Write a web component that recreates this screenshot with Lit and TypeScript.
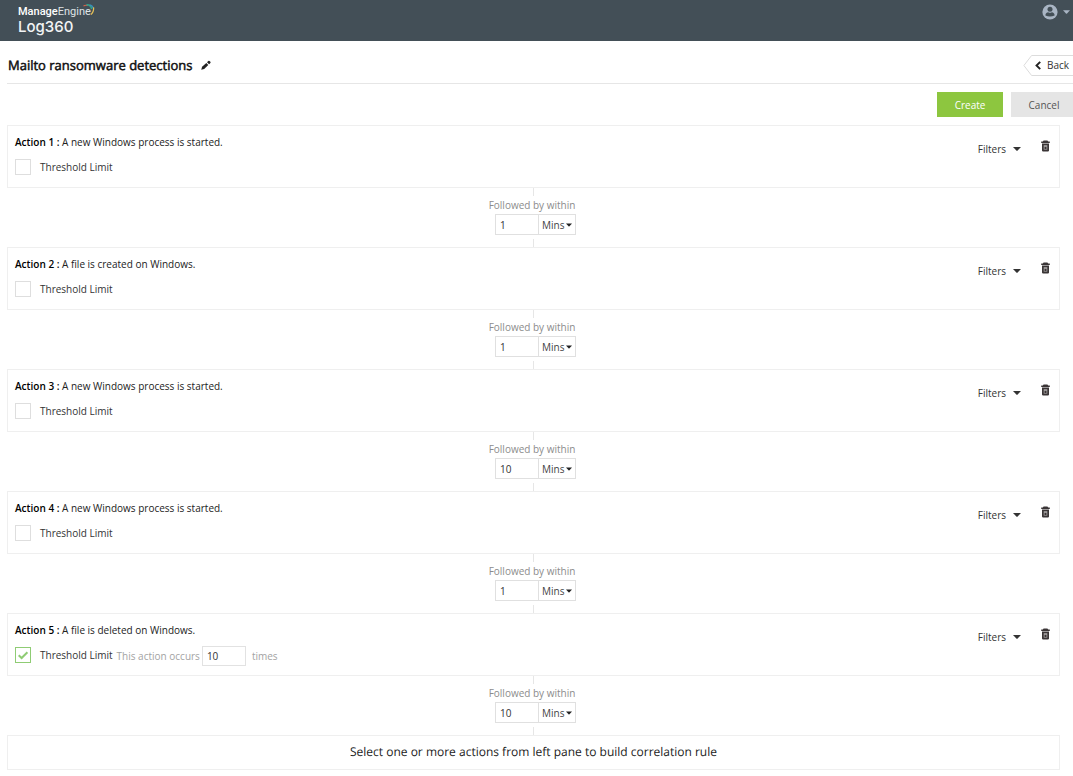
import { LitElement, html, css, nothing } from "lit";
import { customElement, property } from "lit/decorators.js";

interface Action {
  description: string;
  within: number;
  occurs?: number;
}

const ACTIONS: Action[] = [
  { description: "A new Windows process is started.", within: 1 },
  { description: "A file is created on Windows.", within: 1 },
  { description: "A new Windows process is started.", within: 10 },
  { description: "A new Windows process is started.", within: 1 },
  { description: "A file is deleted on Windows.", within: 10, occurs: 10 },
];

const caret = html`<svg class="caret" width="8" height="4" viewBox="0 0 8 4" aria-hidden="true">
  <path d="M0 0H8L4.6 3.6Q4 4.2 3.4 3.6Z" fill="currentColor" />
</svg>`;

const base = css`
  * {
    box-sizing: border-box;
  }
  button,
  input,
  select {
    font: inherit;
    color: inherit;
    text-rendering: inherit;
    margin: 0;
    padding: 0;
    border: 0;
    border-radius: 0;
    background: none;
  }
  button,
  select {
    cursor: pointer;
  }
  svg {
    display: block;
    flex: none;
  }
`;

@customElement("rule-action")
class RuleAction extends LitElement {
  @property({ type: Number }) number = 1;
  @property({ attribute: false }) action!: Action;

  static styles = [
    base,
    css`
      :host {
        display: block;
      }
      .card {
        display: flex;
        justify-content: space-between;
        height: 63px;
        border: 1px solid #efefef;
        padding: 8px 9px 0 7px;
        line-height: 16px;
      }
      .name {
        margin: 0;
        font-size: 10px;
        font-weight: 400;
        color: #222;
      }
      .name b {
        font-weight: 600;
        color: #000;
      }
      .threshold {
        display: flex;
        align-items: flex-start;
        margin-top: 9px;
        color: #333;
      }
      .check {
        position: relative;
        width: 16px;
        height: 16px;
        margin-right: 9px;
      }
      .check input {
        display: block;
        appearance: none;
        width: 16px;
        height: 16px;
        border: 1px solid #dedede;
      }
      .check input:checked {
        border-color: #8fcc74;
      }
      .check svg {
        position: absolute;
        inset: 0;
        pointer-events: none;
      }
      .occurs {
        display: flex;
        align-items: center;
        gap: 2px;
        height: 20px;
        margin: -1px 0 0 4px;
        color: #a3a3a3;
      }
      .occurs input {
        width: 44px;
        height: 20px;
        margin-right: 4px;
        padding: 0 4px;
        border: 1px solid #e2e2e2;
        color: #333;
      }
      .tools {
        display: flex;
        align-items: flex-start;
        gap: 20px;
        padding-top: 6px;
      }
      .filters {
        display: flex;
        align-items: center;
        gap: 7px;
        line-height: 18px;
        color: #333;
      }
      .trash {
        color: #3a3536;
      }
    `,
  ];

  render() {
    const { description, occurs } = this.action;
    const on = occurs !== undefined;
    return html`
      <section class="card">
        <div>
          <h2 class="name"><b>Action ${this.number} :</b> ${description}</h2>
          <div class="threshold">
            <span class="check">
              <input id="limit" type="checkbox" .checked=${on} />
              ${on
                ? html`<svg width="16" height="16" viewBox="0 0 16 16" aria-hidden="true">
                    <path d="M3.7 8.2L6.6 11L12.4 5.2" fill="none" stroke="#8fcc74" stroke-width="2" />
                  </svg>`
                : nothing}
            </span>
            <label for="limit">Threshold Limit</label>
            ${on
              ? html`<span class="occurs">
                  <label for="count">This action occurs</label>
                  <input id="count" type="text" .value=${String(occurs)} />
                  <span>times</span>
                </span>`
              : nothing}
          </div>
        </div>
        <div class="tools">
          <button class="filters" type="button">Filters ${caret}</button>
          <button class="trash" type="button" aria-label="Delete action">
            <svg width="9" height="12" viewBox="0 0 9 12" aria-hidden="true">
              <path d="M0.2 3V1.6H1.8L2.6 0.6H6.4L7.2 1.6H8.8V3Z" fill="currentColor" />
              <path d="M1 3.6H8V10.6Q8 11.4 7.2 11.4H1.8Q1 11.4 1 10.6Z" fill="currentColor" />
              <path d="M2.7 5.2H6.3V9.6H2.7Z" fill="#a9a6a6" />
              <path d="M3.5 6.8H5.5V9H3.5Z" fill="currentColor" />
            </svg>
          </button>
        </div>
      </section>
    `;
  }
}

@customElement("followed-by")
class FollowedBy extends LitElement {
  @property({ type: Number }) within = 1;

  static styles = [
    base,
    css`
      :host {
        display: flex;
        flex-direction: column;
        align-items: center;
        height: 59px;
      }
      .line {
        width: 1px;
        height: 8px;
        background: #e6e6e6;
      }
      .label {
        line-height: 16px;
        margin: 1px 0;
        padding-right: 3px;
        color: #8c8c8c;
      }
      .field {
        display: flex;
        width: 81px;
        height: 21px;
        margin: 0 0 4px 4px;
        border: 1px solid #e0e0e0;
        color: #333;
      }
      .field input {
        width: 42px;
        padding: 0 4px;
      }
      .unit {
        flex: 1;
        display: flex;
        align-items: center;
        border-left: 1px solid #e0e0e0;
        padding-right: 3px;
        color: #444;
      }
      .unit select {
        appearance: none;
        flex: 1;
        min-width: 0;
        padding-left: 3px;
      }
      .caret {
        width: 6px;
        height: 4px;
        color: #222;
      }
    `,
  ];

  render() {
    return html`
      <span class="line"></span>
      <label class="label" for="time">Followed by within</label>
      <div class="field">
        <input id="time" type="text" .value=${String(this.within)} />
        <span class="unit">
          <select aria-label="Time unit">
            <option>Mins</option>
          </select>
          ${caret}
        </span>
      </div>
      <span class="line"></span>
    `;
  }
}

@customElement("app-root")
class AppRoot extends LitElement {
  static styles = [
    base,
    css`
      :host {
        display: block;
        overflow-x: hidden;
        min-height: 100vh;
        background: #fff;
        font: 10px/16px "Open Sans", "Noto Sans", sans-serif;
        color: #333;
      }
      .top {
        display: flex;
        justify-content: space-between;
        align-items: flex-start;
        height: 41px;
        padding: 4px 3px 0 18px;
        background: #434f57;
        color: #f2f4f5;
      }
      .brand {
        display: flex;
        flex-direction: column;
        font-family: Roboto, sans-serif;
      }
      .maker {
        display: flex;
        align-items: flex-start;
        font-size: 11px;
        line-height: 15px;
        color: #dfe3e6;
      }
      .maker b {
        font-weight: 500;
        color: #fff;
      }
      .arc {
        margin-left: -8px;
      }
      .product {
        font: 500 15px/15px Inter, sans-serif;
      }
      .user {
        display: flex;
        align-items: center;
        gap: 5px;
        color: #a9b5c4;
      }
      .user .caret {
        width: 7px;
      }
      .heading {
        display: flex;
        align-items: center;
        gap: 9px;
        height: 43px;
        margin-left: 7px;
        padding: 6px 0 0 1px;
        border-bottom: 1px solid #e6e6e6;
      }
      h1 {
        margin: 0;
        font-size: 13px;
        line-height: 18px;
        font-weight: 400;
        color: #111;
        text-rendering: geometricPrecision;
        -webkit-text-stroke: 0.5px #111;
      }
      .back {
        display: flex;
        align-items: center;
        margin-left: auto;
        height: 21px;
        color: #333;
        text-decoration: none;
      }
      .back span {
        display: flex;
        align-items: center;
        gap: 6px;
        height: 21px;
        padding: 0 4px 0 2px;
        border: solid #dcdcdc;
        border-width: 1px 0;
      }
      .buttons {
        display: flex;
        justify-content: flex-end;
        gap: 8px;
        padding: 8px 0;
      }
      .buttons button {
        width: 66px;
        height: 25px;
      }
      .buttons .create {
        background: #8dc63f;
        color: #fff;
      }
      .buttons .cancel {
        width: 62px;
        padding-left: 4px;
        background: #e5e5e5;
        color: #555;
      }
      .rules {
        padding: 0 13px 0 7px;
      }
      .hint {
        margin: 0;
        height: 35px;
        border: 1px solid #efefef;
        font-size: 12px;
        line-height: 32px;
        text-align: center;
        text-rendering: geometricPrecision;
        color: #222;
      }
    `,
  ];

  render() {
    return html`
      <header class="top">
        <div class="brand">
          <span class="maker">
            <b>Manage</b>Engine
            <svg class="arc" width="12" height="12" viewBox="0 0 12 12" aria-hidden="true">
              <path d="M0.5 2Q2.6 .6 4.8 1.6" fill="none" stroke="#d9634a" stroke-width="1.1" />
              <path d="M3.4 .8Q8 .6 8.6 5" fill="none" stroke="#2fa58c" stroke-width="1.5" />
              <path d="M6.6 .8Q9.6 1.4 10.2 4.2" fill="none" stroke="#3d8fb8" stroke-width="1.2" />
              <path d="M10.5 3.4Q11.2 7.4 8 10.6" fill="none" stroke="#e3c057" stroke-width="1.3" />
            </svg>
          </span>
          <span class="product">Log360</span>
        </div>
        <button class="user" type="button" aria-label="Account">
          <svg width="16" height="16" viewBox="0 0 16 16" aria-hidden="true">
            <circle cx="8" cy="8" r="7.6" fill="currentColor" />
            <circle cx="8" cy="5.3" r="2.5" fill="#434f57" />
            <path d="M3.4 11.4Q3.6 8.4 6.2 8.2Q8 9.4 9.8 8.2Q12.4 8.4 12.6 11.4Q8 13.4 3.4 11.4Z" fill="#434f57" />
          </svg>
          ${caret}
        </button>
      </header>
      <div class="heading">
        <h1>Mailto ransomware detections</h1>
        <button type="button" aria-label="Rename rule">
          <svg width="10" height="10" viewBox="0 0 10 10" aria-hidden="true">
            <path d="M0.2 9.8L1.1 6.8L5.3 2.9L7.3 4.9L3.2 9Z" fill="#222" />
            <path d="M6 2.2L7.3 .9Q7.9 .4 8.5 .9L9.4 1.8Q9.9 2.4 9.4 3L8.1 4.2Z" fill="#222" />
          </svg>
        </button>
        <a class="back" href="#">
          <svg width="10" height="21" viewBox="0 0 10 21" aria-hidden="true">
            <path d="M10 .5H8.6L.9 10.5L8.6 20.5H10" fill="none" stroke="#dcdcdc" />
          </svg>
          <span>
            <svg width="6" height="9" viewBox="0 0 6 9" aria-hidden="true">
              <path d="M5.2 .8L1.5 4.5L5.2 8.2" fill="none" stroke="#222" stroke-width="1.9" />
            </svg>
            Back
          </span>
        </a>
      </div>
      <div class="buttons">
        <button class="create" type="button">Create</button>
        <button class="cancel" type="button">Cancel</button>
      </div>
      <main class="rules">
        ${ACTIONS.map(
          (action, i) => html`
            <rule-action .number=${i + 1} .action=${action}></rule-action>
            <followed-by .within=${action.within}></followed-by>
          `,
        )}
        <p class="hint">Select one or more actions from left pane to build correlation rule</p>
      </main>
    `;
  }
}
